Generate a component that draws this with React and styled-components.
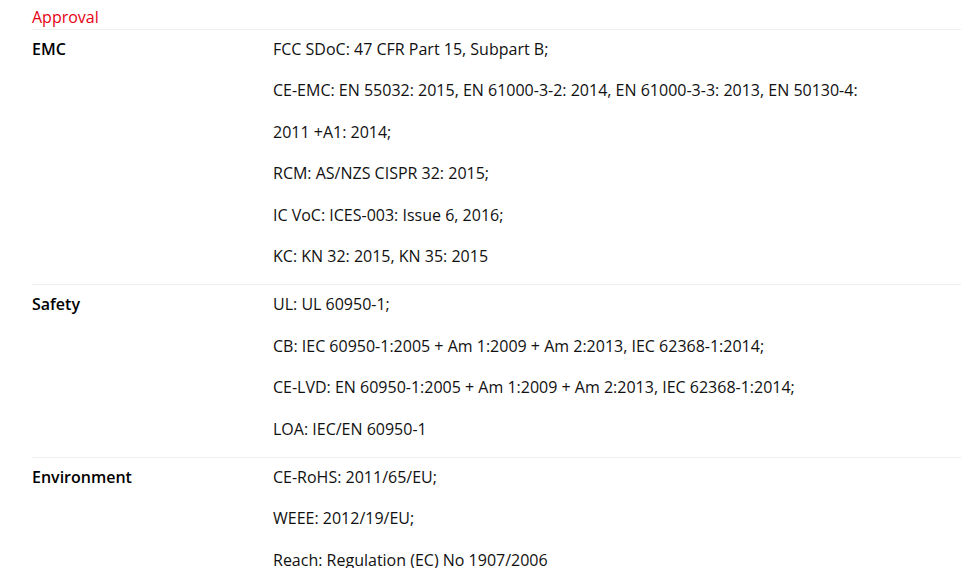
import React from "react";
import styled, { createGlobalStyle } from "styled-components";

const specs = [
    {
        label: "EMC",
        values: [
            "FCC SDoC: 47 CFR Part 15, Subpart B;",
            "CE-EMC: EN 55032: 2015, EN 61000-3-2: 2014, EN 61000-3-3: 2013, EN 50130-4: 2011 +A1: 2014;",
            "RCM: AS/NZS CISPR 32: 2015;",
            "IC VoC: ICES-003: Issue 6, 2016;",
            "KC: KN 32: 2015, KN 35: 2015",
        ],
    },
    {
        label: "Safety",
        values: [
            "UL: UL 60950-1;",
            "CB: IEC 60950-1:2005 + Am 1:2009 + Am 2:2013, IEC 62368-1:2014;",
            "CE-LVD: EN 60950-1:2005 + Am 1:2009 + Am 2:2013, IEC 62368-1:2014;",
            "LOA: IEC/EN 60950-1",
        ],
    },
    {
        label: "Environment",
        values: [
            "CE-RoHS: 2011/65/EU;",
            "WEEE: 2012/19/EU;",
            "Reach: Regulation (EC) No 1907/2006",
        ],
    },
];

const App = () => {
    return (
        <Page>
            <GlobalStyle />
            <Title>Approval</Title>
            {specs.map((row) => (
                <Row key={row.label}>
                    <Label>{row.label}</Label>
                    <Values>
                        {row.values.map((v) => (
                            <p key={v}>{v}</p>
                        ))}
                    </Values>
                </Row>
            ))}
        </Page>
    );
};

export default App;

const GlobalStyle = createGlobalStyle`
    body {
        margin: 0;
        background: #fff;
        font-family: "Open Sans", "Liberation Sans", sans-serif;
    }
`;
const Page = styled.div`
    padding: 6px 10px 0 32px;
`;
const Title = styled.h2`
    margin: 0;
    font-size: 16px;
    font-weight: 400;
    color: #e60012;
    line-height: 23px;
    border-bottom: 1px solid #eeeeee;
`;
const Row = styled.div`
    display: flex;
    margin-top: -1px;
    padding-bottom: 7px;
    border-bottom: 1px solid #eeeeee;
`;
const Label = styled.div`
    width: 241px;
    flex-shrink: 0;
    font-size: 16px;
    font-weight: 600;
    color: #000;
    line-height: 41.4px;
`;
const Values = styled.div`
    width: 596px;
    font-size: 16px;
    color: #111;
    line-height: 41.4px;
    p {
        margin: 0;
    }
`;
